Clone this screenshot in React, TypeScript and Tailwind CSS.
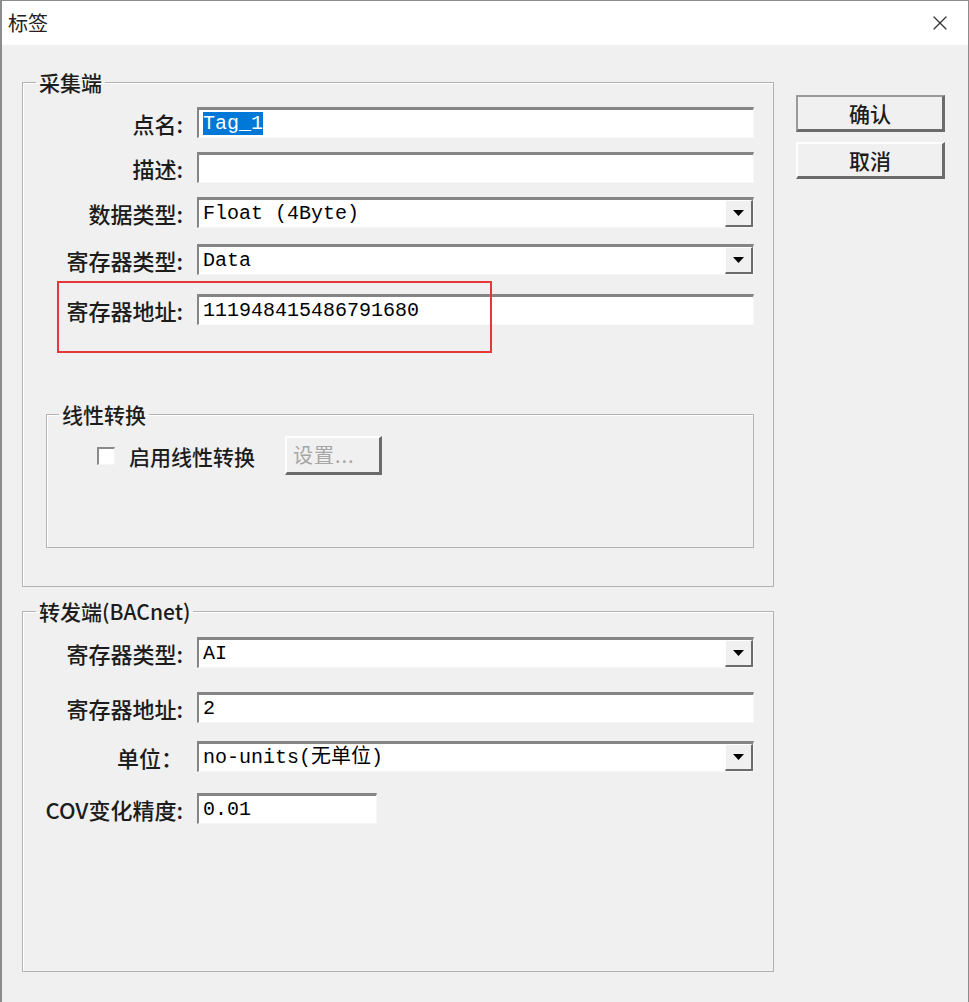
import { X } from "lucide-react";

const cjk = "font-['Noto_Sans_CJK_SC','Noto_Sans',sans-serif]";
const mono = "font-['Liberation_Mono','Noto_Sans_CJK_SC',monospace]";

function Field({ value, combo, width, selected }: { value?: string; combo?: boolean; width?: string; selected?: boolean }) {
    return (
        <div
            className={`relative h-[31px] bg-white border-t-[3px] border-l-[2px] border-[#858585] border-b border-r border-b-[#f7f7f7] border-r-[#f7f7f7] flex items-center pl-[4px] ${mono} text-[20px] text-black ${width ?? "w-[557px]"}`}
        >
            {selected ? (
                <span className="bg-[#0078d7] text-white leading-[23px]">{value}</span>
            ) : (
                <span className="leading-[23px]">{value}</span>
            )}
            {combo && (
                <div className="absolute right-0 top-0 bottom-0 w-[28px] bg-[#f0f0f0] border-t border-l border-white border-b-2 border-r-2 border-b-[#6b6b6b] border-r-[#6b6b6b] flex items-center justify-center">
                    <svg width="11" height="6" viewBox="0 0 11 6">
                        <path d="M0 0 H11 L5.5 6 Z" fill="#000" />
                    </svg>
                </div>
            )}
        </div>
    );
}

function Row({ label, children, className }: { label: string; children: React.ReactNode; className?: string }) {
    return (
        <div className={`flex items-center ${className ?? ""}`}>
            <div className={`w-[161px] pr-[1px] text-right ${cjk} text-[22px] font-medium text-[#1c1c1c] leading-[28px]`}>{label}</div>
            <div className="ml-[13px]">{children}</div>
        </div>
    );
}

function Button({ label, isDefault }: { label: string; isDefault?: boolean }) {
    return (
        <button
            className={`h-[37px] w-[149px] bg-[#f0f0f0] border-t-2 border-l-2 border-b-[3px] border-r-[3px] ${isDefault ? "border-t-[#9a9a9a] border-l-[#9a9a9a]" : "border-t-[#fdfdfd] border-l-[#fdfdfd]"} border-b-[#6b6b6b] border-r-[#6b6b6b] ${cjk} text-[21px] font-medium text-[#1c1c1c] leading-[28px]`}
        >
            {label}
        </button>
    );
}

export default function App() {
    return (
        <div className="relative w-[969px] h-[1002px] bg-[#f0f0f0] border-t border-l-2 border-r border-[#8c8c8c] overflow-hidden">
            {/* title bar */}
            <div className="h-[44px] bg-white flex items-center justify-between pl-[6px] pr-[16px]">
                <span className={`${cjk} text-[20px] text-[#222] leading-[26px]`}>标签</span>
                <X className="w-[24px] h-[24px] text-[#333]" strokeWidth={1.2} />
            </div>

            <div className="flex pl-[20px] pt-[25px] gap-[22px]">
                <div className="w-[752px] flex flex-col">
                    {/* 采集端 */}
                    <fieldset className="border border-[#b3b3b3] shadow-[inset_1px_1px_0_#fff] pr-[19px] pt-[13px] pb-[38px]">
                        <legend className={`ml-[13px] px-[3px] ${cjk} text-[21px] font-medium text-[#1c1c1c] leading-[24px]`}>采集端</legend>
                        <Row label="点名:">
                            <Field value="Tag_1" selected />
                        </Row>
                        <Row label="描述:" className="mt-[14px]">
                            <Field />
                        </Row>
                        <Row label="数据类型:" className="mt-[14px]">
                            <Field value="Float (4Byte)" combo />
                        </Row>
                        <Row label="寄存器类型:" className="mt-[16px]">
                            <Field value="Data" combo />
                        </Row>
                        <Row label="寄存器地址:" className="mt-[19px]">
                            <Field value="111948415486791680" />
                        </Row>

                        {/* 线性转换 */}
                        <fieldset className="ml-[23px] mt-[77px] border border-[#b3b3b3] shadow-[inset_1px_1px_0_#fff] pt-[10px] pb-[72px]">
                            <legend className={`ml-[12px] px-[3px] ${cjk} text-[21px] font-medium text-[#1c1c1c] leading-[24px]`}>线性转换</legend>
                            <div className="flex items-center ml-[50px]">
                                <div className="w-[18px] h-[18px] bg-white border-t-2 border-l-2 border-[#8a8a8a] border-b border-r border-b-[#f5f5f5] border-r-[#f5f5f5]" />
                                <span className={`ml-[14px] ${cjk} text-[21px] font-medium text-[#1c1c1c] leading-[28px]`}>启用线性转换</span>
                                <div className={`ml-[30px] h-[39px] w-[97px] bg-[#f0f0f0] border-t-2 border-l-2 border-[#fdfdfd] border-b-[3px] border-r-[3px] border-b-[#6b6b6b] border-r-[#6b6b6b] flex items-center pl-[6px] ${cjk} text-[20px] text-[#a6a6a6] leading-[26px] tracking-[1px]`}>
                                    设置...
                                </div>
                            </div>
                        </fieldset>
                    </fieldset>

                    {/* 转发端 */}
                    <fieldset className="mt-[12px] border border-[#b3b3b3] shadow-[inset_1px_1px_0_#fff] pr-[19px] pt-[14px] pb-[147px]">
                        <legend className={`ml-[13px] px-[3px] ${cjk} text-[21px] font-medium text-[#1c1c1c] leading-[24px]`}>转发端(BACnet)</legend>
                        <Row label="寄存器类型:">
                            <Field value="AI" combo />
                        </Row>
                        <Row label="寄存器地址:" className="mt-[24px]">
                            <Field value="2" />
                        </Row>
                        <Row label="单位：" className="mt-[18px]">
                            <Field value="no-units(无单位)" combo />
                        </Row>
                        <Row label="COV变化精度:" className="mt-[21px]">
                            <Field value="0.01" width="w-[180px]" />
                        </Row>
                    </fieldset>
                </div>

                <div className="flex flex-col gap-[10px] pt-[25px]">
                    <Button label="确认" isDefault />
                    <Button label="取消" />
                </div>
            </div>

            {/* red annotation box */}
            <div className="absolute left-[55px] top-[280px] w-[435px] h-[72px] border-2 border-[#e5383b]" />
        </div>
    );
}
